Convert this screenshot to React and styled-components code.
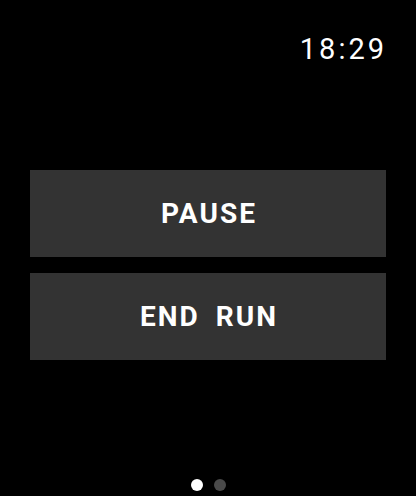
import styled, { createGlobalStyle } from "styled-components";

const GlobalStyle = createGlobalStyle`
  html, body {
    margin: 0;
    padding: 0;
    background: #000;
  }
  body {
    font-family: Roboto, "Liberation Sans", sans-serif;
    color: #fff;
  }
`;

const Screen = styled.div`
  width: 416px;
  height: 496px;
  background: #000;
  display: flex;
  flex-direction: column;
  box-sizing: border-box;
`;

const StatusBar = styled.div`
  display: flex;
  justify-content: flex-end;
  padding: 32px 29px 0 0;
  height: 170px;
  box-sizing: border-box;
`;

const Clock = styled.div`
  font-size: 29px;
  line-height: 34px;
  letter-spacing: 3px;
`;

const Actions = styled.div`
  display: flex;
  flex-direction: column;
  gap: 16px;
  padding: 0 30px;
`;

const ActionButton = styled.button`
  height: 87px;
  border: none;
  background: #333333;
  color: #fff;
  font-family: Roboto, "Liberation Sans", sans-serif;
  font-weight: 700;
  font-size: 28px;
  letter-spacing: 2px;
  word-spacing: 7px;
  padding: 0 0 0 2px;
  display: flex;
  align-items: center;
  justify-content: center;
`;

const Pager = styled.div`
  margin-top: auto;
  display: flex;
  justify-content: center;
  gap: 11px;
  padding-bottom: 5px;
`;

const Dot = styled.span`
  width: 12px;
  height: 12px;
  border-radius: 50%;
  background: ${(p) => (p.$active ? "#fff" : "#4a4a4a")};
`;

export default function App() {
  return (
    <>
      <GlobalStyle />
      <Screen>
        <StatusBar>
          <Clock>18:29</Clock>
        </StatusBar>
        <Actions>
          <ActionButton>PAUSE</ActionButton>
          <ActionButton>END RUN</ActionButton>
        </Actions>
        <Pager>
          <Dot $active />
          <Dot />
        </Pager>
      </Screen>
    </>
  );
}
